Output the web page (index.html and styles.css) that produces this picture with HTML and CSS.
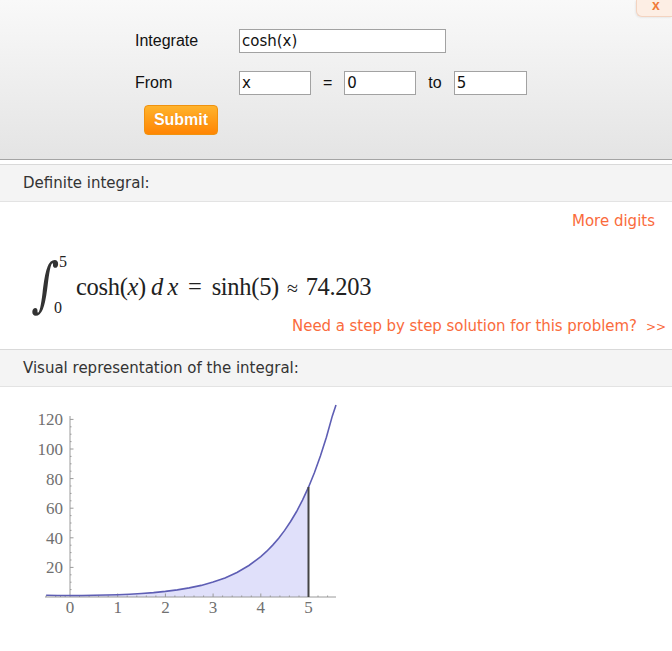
FILE: index.html
```html
<!DOCTYPE html>
<html>
<head>
<meta charset="utf-8">
<link rel="stylesheet" href="styles.css">
</head>
<body>
<div class="page">
  <div class="close">x</div>
  <div class="top">
    <div class="form">
      <div class="label">Integrate</div>
      <div class="field"><div class="input wide">cosh(x)</div></div>
      <div class="label">From</div>
      <div class="field">
        <div class="input small">x</div>
        <span class="word">=</span>
        <div class="input small">0</div>
        <span class="word">to</span>
        <div class="input small2">5</div>
      </div>
    </div>
    <div class="btnrow"><div class="submit">Submit</div></div>
  </div>

  <div class="section-head first">Definite integral:</div>
  <div class="section-body">
    <div class="more"><span class="link">More digits</span></div>
    <div class="formula">
      <span class="intsign">∫</span>
      <span class="limits"><span class="up">5</span><span class="low">0</span></span>
      <span class="expr">cosh(<i>x</i>)<span class="dx"><i>d</i>&thinsp;<i>x</i></span><span class="op">=</span>sinh(5)<span class="op approx">≈</span>74.203</span>
    </div>
    <div class="step"><span class="link">Need a step by step solution for this problem?</span><span class="arrows">&gt;&gt;</span></div>
  </div>

  <div class="section-head">Visual representation of the integral:</div>
  <div class="plot">
    <svg width="330" height="225" viewBox="0 0 330 225">
      <polygon class="fill" points="50,195 50,193.5 73.85,193.3 97.7,192.7 121.55,191.5 145.4,189.4 169.25,185.9 193.1,180.1 216.95,170.5 228.9,163.5 240.8,154.6 246.8,149.2 252.7,143.1 258.7,136.2 264.65,128.4 270.6,119.5 276.6,109.5 282.5,98.1 288.5,85.2 288.5,195"/>
      <g class="axis">
        <line x1="25" y1="195" x2="316" y2="195"/>
        <line x1="50" y1="14" x2="50" y2="195"/>
      </g>
      <g class="ticks">
        <path d="M26.2,195v-1.5M35.7,195v-1.5M40.5,195v-1.5M45.2,195v-1.5M59.5,195v-1.5M69.1,195v-1.5M78.6,195v-1.5M88.2,195v-1.5M107.2,195v-1.5M116.8,195v-1.5M126.3,195v-1.5M135.9,195v-1.5M154.9,195v-1.5M164.5,195v-1.5M174,195v-1.5M183.6,195v-1.5M202.6,195v-1.5M212.2,195v-1.5M221.7,195v-1.5M231.3,195v-1.5M250.3,195v-1.5M259.9,195v-1.5M269.4,195v-1.5M279,195v-1.5M298,195v-1.5M307.6,195v-1.5"/>
        <path d="M97.7,195v-3.5M145.4,195v-3.5M193.1,195v-3.5M240.8,195v-3.5M288.5,195v-3.5"/>
        <path d="M50,187.6h1.5M50,180.2h1.5M50,172.8h1.5M50,158h1.5M50,150.6h1.5M50,143.2h1.5M50,128.4h1.5M50,121h1.5M50,113.6h1.5M50,98.8h1.5M50,91.4h1.5M50,84h1.5M50,69.2h1.5M50,61.8h1.5M50,54.4h1.5M50,39.6h1.5M50,32.2h1.5M50,24.8h1.5"/>
        <path d="M50,165.4h3.5M50,135.8h3.5M50,106.2h3.5M50,76.6h3.5M50,47h3.5M50,17.4h3.5"/>
      </g>
      <polyline class="curve" points="26.15,193.3 38,193.45 50,193.5 62,193.45 73.85,193.3 85.8,193.05 97.7,192.7 109.6,192.2 121.55,191.5 133.5,190.6 145.4,189.4 157.3,187.9 169.25,185.9 181.2,183.4 193.1,180.1 205,175.9 216.95,170.5 228.9,163.5 240.8,154.6 246.8,149.2 252.7,143.1 258.7,136.2 264.65,128.4 270.6,119.5 276.6,109.5 282.5,98.1 288.5,85.2 294.5,70.5 300.4,54 306.4,35.2 312.35,13.9 316,3"/>
      <line class="bound" x1="288.5" y1="195" x2="288.5" y2="85"/>
      <g class="ylab">
        <text x="43" y="171">20</text>
        <text x="43" y="141.5">40</text>
        <text x="43" y="112">60</text>
        <text x="43" y="82.5">80</text>
        <text x="43" y="52.5">100</text>
        <text x="43" y="23">120</text>
      </g>
      <g class="xlab">
        <text x="50" y="211">0</text>
        <text x="97.7" y="211">1</text>
        <text x="145.4" y="211">2</text>
        <text x="193.1" y="211">3</text>
        <text x="240.8" y="211">4</text>
        <text x="288.5" y="211">5</text>
      </g>
    </svg>
  </div>
</div>
</body>
</html>
```

FILE: styles.css
```css
* { box-sizing: border-box; }
html, body { margin: 0; padding: 0; background: #fff; }
.page {
  position: relative;
  width: 672px;
  height: 651px;
  overflow: hidden;
  font-family: "DejaVu Sans", Verdana, sans-serif;
}
.close {
  position: absolute;
  top: 0;
  right: 0;
  width: 36px;
  height: 17px;
  background: #fdeee4;
  border-left: 1px solid #f3d3c0;
  border-bottom: 1px solid #f3d3c0;
  border-bottom-left-radius: 6px;
  box-shadow: -1px 1px 2px rgba(0,0,0,0.06);
  color: #f07a3a;
  font-family: "Liberation Sans", Arial, sans-serif;
  font-size: 14px;
  font-weight: bold;
  text-align: center;
  line-height: 11px;
  padding-left: 3px;
  z-index: 2;
}
.top {
  height: 160px;
  background: linear-gradient(#f9f9f9, #e4e4e4);
  border-bottom: 1px solid #a4a4a4;
  padding: 29px 0 0 135px;
}
.form {
  display: grid;
  grid-template-columns: 104px auto;
  row-gap: 18px;
  align-items: center;
}
.label, .word {
  font-family: "Liberation Sans", Arial, sans-serif;
  font-size: 16px;
  color: #111;
}
.field {
  display: flex;
  align-items: center;
  gap: 12px;
}
.input {
  height: 24px;
  border: 1px solid #a2a2a2;
  background: #fff;
  font-size: 15px;
  line-height: 22px;
  padding-left: 2px;
  color: #111;
}
.wide { width: 207px; }
.small { width: 72px; }
.small2 { width: 73px; }
.btnrow { padding: 10px 0 0 9px; }
.submit {
  display: inline-block;
  width: 74px;
  height: 30px;
  border: 1px solid #f0920e;
  border-radius: 4px;
  background: linear-gradient(#ffb32c, #ff8503);
  color: #fff;
  font-family: "Liberation Sans", Arial, sans-serif;
  font-weight: bold;
  font-size: 16px;
  line-height: 28px;
  text-align: center;
  text-shadow: 0 0 1px rgba(200,90,0,0.5);
}
.section-head {
  margin-top: 0;
  height: 38px;
  background: #f4f4f4;
  border-top: 1px solid #d9d9d9;
  border-bottom: 1px solid #e3e3e3;
  padding-left: 23px;
  font-size: 15px;
  line-height: 36px;
  color: #333;
}
.section-head.first { margin-top: 4px; }
.section-body {
  height: 147px;
  padding: 8px 17px 0 0;
}
.link { color: #fa6b3c; font-size: 15px; }
.more { text-align: right; line-height: 22px; }
.formula {
  display: flex;
  align-items: center;
  height: 64px;
  margin-top: 21px;
  padding-left: 34px;
  font-family: "Liberation Serif", "Times New Roman", serif;
  color: #222;
}
.intsign {
  font-family: "DejaVu Serif", serif;
  font-size: 44px;
  line-height: 64px;
  display: inline-block;
  transform: scaleY(1.35) skewX(-8deg);
  color: #333;
}
.limits {
  display: flex;
  flex-direction: column;
  justify-content: space-between;
  height: 62px;
  font-size: 16px;
  line-height: 16px;
  width: 16px;
  margin-left: -3px;
}
.limits .up { margin-left: 5px; }
.expr {
  font-size: 24.5px;
  margin-left: 6px;
  margin-top: 4px;
  letter-spacing: -0.3px;
}
.dx { margin-left: 5px; }
.op { margin: 0 10px; }
.op.approx { margin: 0 8px; font-size: 20px; }
.step {
  text-align: right;
  line-height: 22px;
  margin-right: -11px;
  margin-top: -2px;
  letter-spacing: -0.05px;
}
.arrows {
  color: #fa6b3c;
  font-size: 12px;
  margin-left: 9px;
}
.plot { padding: 15px 0 0 20px; }
.fill { fill: #e0e0fa; }
.axis line { stroke: #9a9a9a; stroke-width: 1; }
.ticks path { stroke: #9a9a9a; stroke-width: 1; fill: none; }
.curve { fill: none; stroke: #5e5eb4; stroke-width: 1.6; }
.bound { stroke: #444; stroke-width: 2; }
.ylab text, .xlab text {
  font-family: "Liberation Serif", serif;
  font-size: 17px;
  fill: #707070;
}
.ylab text { text-anchor: end; }
.xlab text { text-anchor: middle; }
```
